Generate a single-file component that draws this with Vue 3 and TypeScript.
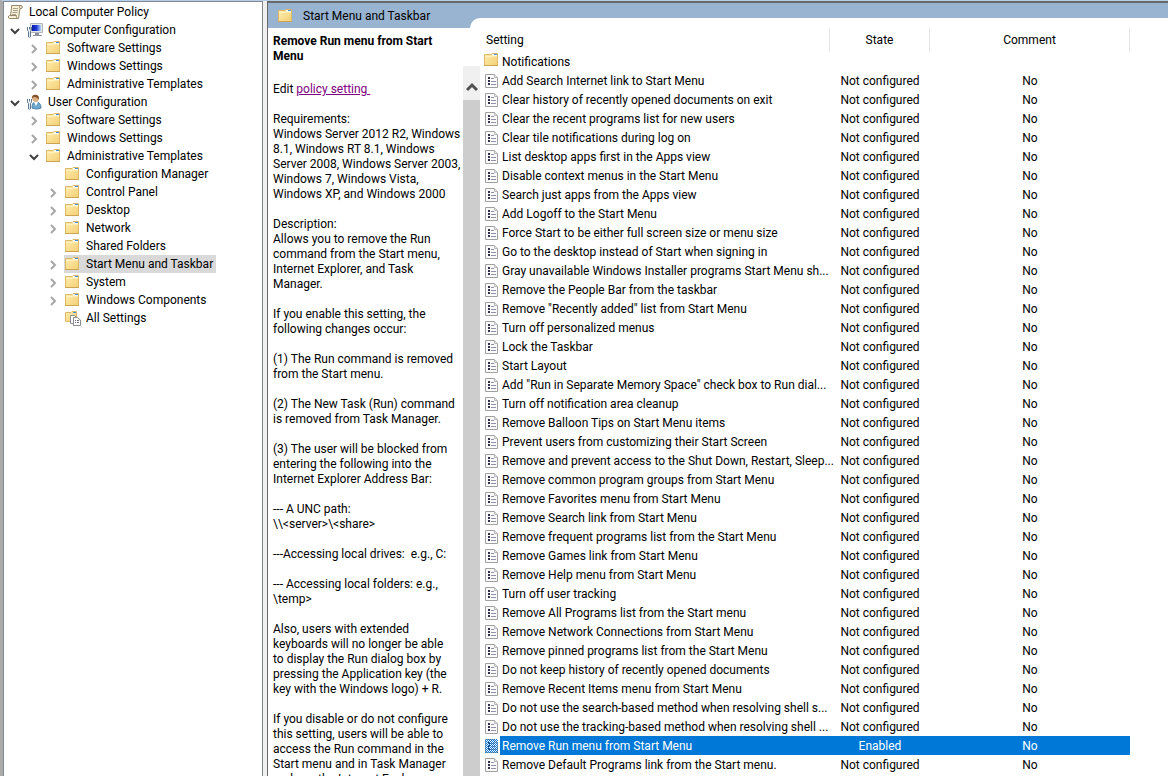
<script setup lang="ts">
import { computed, ref } from 'vue'

type IconName = 'scroll' | 'computer' | 'user' | 'folder' | 'all'

interface TreeNode {
  id: number
  label: string
  depth: number
  icon: IconName
  state: 'open' | 'closed' | 'leaf'
}

const nodes = ref<TreeNode[]>([
  { id: 1, label: 'Local Computer Policy', depth: 0, icon: 'scroll', state: 'leaf' },
  { id: 2, label: 'Computer Configuration', depth: 1, icon: 'computer', state: 'open' },
  { id: 3, label: 'Software Settings', depth: 2, icon: 'folder', state: 'closed' },
  { id: 4, label: 'Windows Settings', depth: 2, icon: 'folder', state: 'closed' },
  { id: 5, label: 'Administrative Templates', depth: 2, icon: 'folder', state: 'closed' },
  { id: 6, label: 'User Configuration', depth: 1, icon: 'user', state: 'open' },
  { id: 7, label: 'Software Settings', depth: 2, icon: 'folder', state: 'closed' },
  { id: 8, label: 'Windows Settings', depth: 2, icon: 'folder', state: 'closed' },
  { id: 9, label: 'Administrative Templates', depth: 2, icon: 'folder', state: 'open' },
  { id: 10, label: 'Configuration Manager', depth: 3, icon: 'folder', state: 'leaf' },
  { id: 11, label: 'Control Panel', depth: 3, icon: 'folder', state: 'closed' },
  { id: 12, label: 'Desktop', depth: 3, icon: 'folder', state: 'closed' },
  { id: 13, label: 'Network', depth: 3, icon: 'folder', state: 'closed' },
  { id: 14, label: 'Shared Folders', depth: 3, icon: 'folder', state: 'leaf' },
  { id: 15, label: 'Start Menu and Taskbar', depth: 3, icon: 'folder', state: 'closed' },
  { id: 16, label: 'System', depth: 3, icon: 'folder', state: 'closed' },
  { id: 17, label: 'Windows Components', depth: 3, icon: 'folder', state: 'closed' },
  { id: 18, label: 'All Settings', depth: 3, icon: 'all', state: 'leaf' },
])

const selectedNode = ref(15)

const visibleNodes = computed(() => {
  const out: TreeNode[] = []
  let hiddenBelow = Infinity
  for (const n of nodes.value) {
    if (n.depth > hiddenBelow) continue
    hiddenBelow = n.state === 'closed' ? n.depth : Infinity
    out.push(n)
  }
  return out
})

function toggle(n: TreeNode) {
  n.state = n.state === 'open' ? 'closed' : 'open'
}

const settings: string[] = [
  'Add Search Internet link to Start Menu',
  'Clear history of recently opened documents on exit',
  'Clear the recent programs list for new users',
  'Clear tile notifications during log on',
  'List desktop apps first in the Apps view',
  'Disable context menus in the Start Menu',
  'Search just apps from the Apps view',
  'Add Logoff to the Start Menu',
  'Force Start to be either full screen size or menu size',
  'Go to the desktop instead of Start when signing in',
  'Gray unavailable Windows Installer programs Start Menu sh...',
  'Remove the People Bar from the taskbar',
  'Remove "Recently added" list from Start Menu',
  'Turn off personalized menus',
  'Lock the Taskbar',
  'Start Layout',
  'Add "Run in Separate Memory Space" check box to Run dial...',
  'Turn off notification area cleanup',
  'Remove Balloon Tips on Start Menu items',
  'Prevent users from customizing their Start Screen',
  'Remove and prevent access to the Shut Down, Restart, Sleep...',
  'Remove common program groups from Start Menu',
  'Remove Favorites menu from Start Menu',
  'Remove Search link from Start Menu',
  'Remove frequent programs list from the Start Menu',
  'Remove Games link from Start Menu',
  'Remove Help menu from Start Menu',
  'Turn off user tracking',
  'Remove All Programs list from the Start menu',
  'Remove Network Connections from Start Menu',
  'Remove pinned programs list from the Start Menu',
  'Do not keep history of recently opened documents',
  'Remove Recent Items menu from Start Menu',
  'Do not use the search-based method when resolving shell s...',
  'Do not use the tracking-based method when resolving shell ...',
  'Remove Run menu from Start Menu',
  'Remove Default Programs link from the Start menu.',
]

const enabledSetting = 'Remove Run menu from Start Menu'
const selectedSetting = ref(enabledSetting)

const paragraphs: string[] = [
  'Requirements:\nWindows Server 2012 R2, Windows\n8.1, Windows RT 8.1, Windows\nServer 2008, Windows Server 2003,\nWindows 7, Windows Vista,\nWindows XP, and Windows 2000',
  'Description:\nAllows you to remove the Run\ncommand from the Start menu,\nInternet Explorer, and Task\nManager.',
  'If you enable this setting, the\nfollowing changes occur:',
  '(1) The Run command is removed\nfrom the Start menu.',
  '(2) The New Task (Run) command\nis removed from Task Manager.',
  '(3) The user will be blocked from\nentering the following into the\nInternet Explorer Address Bar:',
  '--- A UNC path:\n\\\\<server>\\<share>',
  '---Accessing local drives:  e.g., C:',
  '--- Accessing local folders: e.g.,\n\\temp>',
  'Also, users with extended\nkeyboards will no longer be able\nto display the Run dialog box by\npressing the Application key (the\nkey with the Windows logo) + R.',
  'If you disable or do not configure\nthis setting, users will be able to\naccess the Run command in the\nStart menu and in Task Manager\nand use the Internet Explorer',
]
</script>

<template>
  <svg class="defs" aria-hidden="true">
    <defs>
      <linearGradient id="gold" x1="0" y1="0" x2="1" y2="1">
        <stop offset="0" stop-color="#ffeeb0" />
        <stop offset="1" stop-color="#f3cf74" />
      </linearGradient>
      <linearGradient id="screen" x1="0" y1="0" x2="1" y2="0">
        <stop offset="0" stop-color="#0a18a8" />
        <stop offset="0.5" stop-color="#1c3cd8" />
        <stop offset="1" stop-color="#b8d4ff" />
      </linearGradient>
      <pattern id="dither" width="2" height="2" patternUnits="userSpaceOnUse">
        <rect width="1" height="1" fill="#0078d7" />
        <rect x="1" y="1" width="1" height="1" fill="#0078d7" />
      </pattern>
    </defs>
    <symbol id="i-folder" viewBox="0 0 16 16">
      <path d="M.5 2.500H7l1-1h5.500v12H.5z" fill="url(#gold)" stroke="#dcb967" />
      <path d="M8 2h5v2H8z" fill="#fff" />
      <path d="M10 2h3v1h-3z" fill="#3f8fe0" />
      <path d="M1 4.500h6.500l1-.5H13" fill="none" stroke="#fff3c4" />
      <path d="M0 13.500h14" stroke="#cda552" />
    </symbol>
    <symbol id="i-scroll" viewBox="0 0 16 16">
      <path d="M3.500 1.500h9.500c1.800 0 1.800 3 0 3h-1L10.500 14.500H1.500C0 14.500 0 11.500 1.500 11.500H2.500L3.500 4z" fill="#f7f0d8" stroke="#96896a" />
      <path d="M12 4.500c-1.200-1.500-.3-3 1-3M2 11.500h6.500c-.4 1.500 0 3 1.500 3" fill="none" stroke="#96896a" />
      <path d="M5 4.500h5M5 6.500h5M4.500 8.500h5M4 10.500h4" stroke="#a9a08a" />
    </symbol>
    <symbol id="i-computer" viewBox="0 0 16 16">
      <path d="M3.500 1.500h12v9h-12z" fill="#e4e6ea" stroke="#b0b4bc" />
      <path d="M5 3h9v6H5z" fill="url(#screen)" />
      <path d="M8 11h4v2H8zM6 13h9v1H6z" fill="#8c929c" />
      <path d="M.5 5v3l1 1.500V15h2V9.500L4.500 8V5M2.500 5v2.500" fill="none" stroke="#60788e" />
      <path d="M2 9h1v6H2z" fill="#dfe9f0" />
    </symbol>
    <symbol id="i-user" viewBox="0 0 16 16">
      <path d="M5 14c0-4 1-6 4-6s5 2 5 6c-3 1.300-6 1.300-9 0z" fill="#6fa8cf" stroke="#4e7fa6" />
      <path d="M7 8l2 4 2-4z" fill="#fff" />
      <circle cx="8.500" cy="4.500" r="3.200" fill="#dfb07d" />
      <path d="M5 5C4.500 1 7 .5 9 .8c3 .4 3.500 3 2.500 5.200C11 4 9 3 7.500 3 6 3 5.500 4 5 5z" fill="#84552c" />
      <path d="M.5 5v3l1 1.500V15h2V9.500L4.500 8V5M2.500 5v2.500" fill="none" stroke="#60788e" />
      <path d="M2 9h1v6H2z" fill="#dfe9f0" />
    </symbol>
    <symbol id="i-all" viewBox="0 0 16 16">
      <path d="M.5 2.500H6l1-1h4.500v10H.5z" fill="url(#gold)" stroke="#dcb967" />
      <path d="M8 2h3v1H8z" fill="#3f8fe0" />
      <path d="M5.500 5.500h4l2 2v6h-6z" fill="#fff" stroke="#8b8b8b" />
      <path d="M8.500 7.500h4l3 2.500v5.500h-7z" fill="#fff" stroke="#8b8b8b" />
      <path d="M10 10.500h1M12 10.500h2M10 12.500h1M12 12.500h2" stroke="#6b6b80" />
    </symbol>
    <symbol id="i-doc" viewBox="0 0 14 16">
      <path d="M.5 1.500h9l3 3v10H.5z" fill="#fafafa" stroke="#a0a0a0" />
      <path d="M9.500 1.500v3h3" fill="#e6e6e6" stroke="#b8b8b8" />
      <path d="M3 4h2v2H3zM3 7h2v2H3zM3 10h2v2H3z" fill="#2e2e48" />
      <path d="M6 5.500h3M6 8.500h5M6 11.500h5" stroke="#9090a8" />
    </symbol>
  </svg>

  <div class="console">
    <nav class="tree" aria-label="Console tree">
      <ul>
        <li
          v-for="n in visibleNodes"
          :key="n.id"
          :class="['node', `depth-${n.depth}`, { selected: n.id === selectedNode }]"
        >
          <span v-if="n.depth > 0" class="toggle-slot">
            <button v-if="n.state !== 'leaf'" class="toggle" :class="n.state" :aria-label="`Toggle ${n.label}`" @click="toggle(n)">
              <svg v-if="n.state === 'open'" viewBox="0 0 10 10"><path d="M1 3l4 4 4-4" /></svg>
              <svg v-else viewBox="0 0 10 10"><path d="M3 1l4 4-4 4" /></svg>
            </button>
          </span>
          <button class="label" @click="selectedNode = n.id">
            <svg class="icon"><use :href="`#i-${n.icon}`" /></svg>
            <span>{{ n.label }}</span>
          </button>
        </li>
      </ul>
    </nav>

    <main class="result">
      <header class="title">
        <svg class="icon"><use href="#i-folder" /></svg>
        <span>Start Menu and Taskbar</span>
      </header>

      <div class="panes">
        <section class="details">
          <div class="text">
            <h1>Remove Run menu from Start<br />Menu</h1>
            <p>Edit <a href="#policy">policy setting&nbsp;</a></p>
            <p v-for="(p, i) in paragraphs" :key="i">{{ p }}</p>
          </div>
          <div class="scroll">
            <button class="up" aria-label="Scroll up">
              <svg viewBox="0 0 12 10"><path d="M1 8l5-5 5 5" /></svg>
            </button>
            <div class="thumb"></div>
          </div>
        </section>

        <section class="list">
          <table>
            <colgroup>
              <col class="c-setting" />
              <col class="c-state" />
              <col class="c-comment" />
              <col />
            </colgroup>
            <thead>
              <tr>
                <th scope="col" class="first"><span>Setting</span></th>
                <th scope="col"><span>State</span></th>
                <th scope="col"><span>Comment</span></th>
                <td></td>
              </tr>
            </thead>
            <tbody>
              <tr>
                <td class="first">
                  <div class="entry">
                    <svg class="icon"><use href="#i-folder" /></svg>
                    <span class="name">Notifications</span>
                  </div>
                </td>
                <td></td>
                <td></td>
                <td></td>
              </tr>
              <tr
                v-for="s in settings"
                :key="s"
                :class="{ active: s === selectedSetting }"
                @click="selectedSetting = s"
              >
                <td class="first">
                  <div class="entry">
                    <svg class="doc" viewBox="0 0 14 16">
                      <use href="#i-doc" width="14" height="16" />
                      <rect v-if="s === selectedSetting" x="0" y="1" width="13" height="14" fill="url(#dither)" />
                    </svg>
                    <span class="name">{{ s }}</span>
                  </div>
                </td>
                <td class="cell">{{ s === enabledSetting ? 'Enabled' : 'Not configured' }}</td>
                <td class="cell">No</td>
                <td></td>
              </tr>
            </tbody>
          </table>
        </section>
      </div>
    </main>
  </div>
</template>

<style>
body {
  background: #fff;
  overflow: hidden;
}
</style>

<style scoped>
.defs {
  position: absolute;
  width: 0;
  height: 0;
}
.console {
  display: flex;
  gap: 4px;
  height: 100vh;
  box-sizing: border-box;
  border-top: 1px solid #b4cde8;
  border-left: 3px solid #ababab;
  background: #f0f0f0;
  color: #000;
  font: 12px/18px Roboto, "Open Sans", "Noto Sans", sans-serif;
  overflow: hidden;
}
button {
  padding: 0;
  border: 0;
  background: none;
  color: inherit;
  font: inherit;
  text-align: left;
}
.icon {
  flex: none;
  width: 16px;
  height: 16px;
}
.tree {
  flex: none;
  width: 260px;
  box-sizing: border-box;
  border: 1px solid #828790;
  border-bottom: 0;
  background: #fff;
}
.tree ul {
  margin: 0;
  padding: 1px 0 0;
  list-style: none;
}
.node {
  display: flex;
  height: 18px;
  padding-left: 3px;
}
.depth-2 {
  padding-left: 22px;
}
.depth-3 {
  padding-left: 41px;
}
.toggle-slot {
  display: flex;
  align-items: center;
  flex: none;
  width: 19px;
}
.toggle {
  display: flex;
  width: 16px;
  height: 18px;
  align-items: center;
  justify-content: center;
  padding-top: 2px;
}
.toggle svg {
  width: 10px;
  height: 10px;
  fill: none;
  stroke: #a6a6a6;
  stroke-width: 2;
}
.toggle.open svg {
  stroke: #404040;
}
.label {
  display: flex;
  align-items: center;
  gap: 5px;
  padding: 0 3px 0 1px;
  white-space: nowrap;
}
.selected .label {
  background: #d9d9d9;
}
.result {
  display: flex;
  flex: 1;
  flex-direction: column;
  min-width: 0;
  border-top: 2px solid #696969;
  border-left: 1px solid #696969;
  background: #fff;
}
.title {
  display: flex;
  align-items: center;
  gap: 9px;
  height: 25px;
  flex: none;
  padding-left: 10px;
  background: #99b4d1;
}
.panes {
  display: flex;
  flex: 1;
  min-height: 0;
}
.details {
  display: flex;
  flex: none;
  width: 212px;
  line-height: 15px;
}
.text {
  flex: 1;
  min-width: 0;
  padding: 6px 0 0 5px;
  overflow: hidden;
}
.text h1 {
  margin: 0;
  font-size: 12px;
  line-height: 15px;
  white-space: nowrap;
}
.text p {
  margin: 0;
  padding-top: 15px;
  white-space: pre;
}
.text h1 + p {
  padding-top: 18px;
}
.text a {
  color: #800080;
}
.scroll {
  display: flex;
  flex: none;
  flex-direction: column;
  width: 17px;
  margin-top: 38px;
  background: #f0f0f0;
}
.up {
  display: flex;
  height: 34px;
  box-sizing: border-box;
  flex: none;
  align-items: center;
  justify-content: center;
  padding-top: 8px;
}
.up svg {
  width: 12px;
  height: 10px;
  fill: none;
  stroke: #505050;
  stroke-width: 3;
}
.thumb {
  flex: 1;
  background: #cdcdcd;
}
.list {
  flex: 1;
  min-width: 0;
  margin: -10px 0 0 -10px;
  padding: 10px 0 0 14px;
  border-top-left-radius: 10px;
  background: #fff;
  overflow: hidden;
  clip-path: polygon(0 0, 100% 0, 100% 100%, 10px 100%, 10px 20px, 0 20px);
}
table {
  width: 100%;
  table-layout: fixed;
  border-collapse: separate;
  border-spacing: 0;
}
.c-setting {
  width: 346px;
}
.c-state {
  width: 100px;
}
.c-comment {
  width: 200px;
}
th,
td {
  height: 19px;
  padding: 0;
  line-height: 17px;
  white-space: nowrap;
}
th {
  height: 24px;
  border-right: 1px solid #e5e5e5;
  font-weight: 400;
  text-align: center;
}
th.first {
  padding-left: 2px;
  text-align: left;
}
.entry {
  display: flex;
  align-items: flex-start;
  height: 19px;
}
.doc {
  flex: none;
  width: 14px;
  height: 16px;
  margin: 2px 1px 0;
}
.name {
  flex: 1;
  padding: 2px 0 0 2px;
}
td.cell {
  height: 17px;
  padding-top: 2px;
  text-align: center;
}
.active .name,
.active .cell {
  background: #0078d7;
  color: #fff;
}
</style>
